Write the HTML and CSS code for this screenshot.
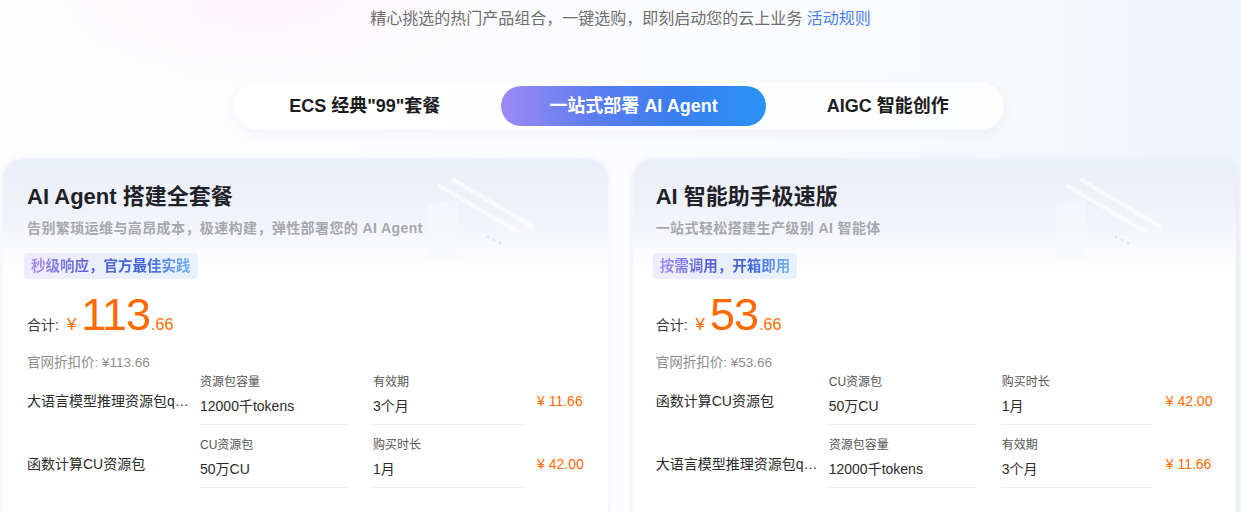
FILE: index.html
```html
<!DOCTYPE html>
<html lang="zh-CN">
<head>
<meta charset="utf-8">
<title>AI Agent 套餐</title>
<link rel="stylesheet" href="styles.css">
</head>
<body>
<div class="page">
  <p class="intro">精心挑选的热门产品组合，一键选购，即刻启动您的云上业务 <a class="rule-link" href="#">活动规则</a></p>

  <div class="tabs-wrap">
    <div class="tabs">
      <div class="tab">ECS 经典"99"套餐</div>
      <div class="tab active">一站式部署 AI Agent</div>
      <div class="tab">AIGC 智能创作</div>
    </div>
  </div>

  <div class="cards">
    <div class="card">
      <svg class="deco" width="110" height="80" viewBox="0 0 110 80"><path d="M0 28 L30 22 L30 80 L0 80 Z" fill="#f7f8fc" opacity="0.6"/><g stroke="#ffffff" stroke-width="4" opacity="0.7"><line x1="10" y1="8" x2="90" y2="55"/><line x1="24" y1="2" x2="105" y2="50"/></g><g fill="#d3d8e2"><circle cx="60" cy="60" r="1"/><circle cx="66" cy="63" r="1"/><circle cx="72" cy="66" r="1"/></g></svg>
      <h2 class="card-title">AI Agent 搭建全套餐</h2>
      <p class="card-sub">告别繁琐运维与高昂成本，极速构建，弹性部署您的 AI Agent</p>
      <div class="badge"><span>秒级响应，官方最佳实践</span></div>
      <div class="price-row">
        <span class="price-label">合计:</span>
        <span class="yen">¥</span><span class="big">113</span><span class="dec">.66</span>
      </div>
      <p class="orig">官网折扣价: ¥113.66</p>
      <div class="items">
        <div class="item">
          <div class="item-name">大语言模型推理资源包qwen-plus</div>
          <div class="spec s1"><div class="spec-k">资源包容量</div><div class="spec-v">12000千tokens</div></div>
          <div class="spec s2"><div class="spec-k">有效期</div><div class="spec-v">3个月</div></div>
          <div class="item-price">¥ 11.66</div>
        </div>
        <div class="item">
          <div class="item-name">函数计算CU资源包</div>
          <div class="spec s1"><div class="spec-k">CU资源包</div><div class="spec-v">50万CU</div></div>
          <div class="spec s2"><div class="spec-k">购买时长</div><div class="spec-v">1月</div></div>
          <div class="item-price">¥ 42.00</div>
        </div>
      </div>
    </div>

    <div class="card">
      <svg class="deco" width="110" height="80" viewBox="0 0 110 80"><path d="M0 28 L30 22 L30 80 L0 80 Z" fill="#f7f8fc" opacity="0.6"/><g stroke="#ffffff" stroke-width="4" opacity="0.7"><line x1="10" y1="8" x2="90" y2="55"/><line x1="24" y1="2" x2="105" y2="50"/></g><g fill="#d3d8e2"><circle cx="60" cy="60" r="1"/><circle cx="66" cy="63" r="1"/><circle cx="72" cy="66" r="1"/></g></svg>
      <h2 class="card-title">AI 智能助手极速版</h2>
      <p class="card-sub">一站式轻松搭建生产级别 AI 智能体</p>
      <div class="badge"><span>按需调用，开箱即用</span></div>
      <div class="price-row">
        <span class="price-label">合计:</span>
        <span class="yen">¥</span><span class="big">53</span><span class="dec">.66</span>
      </div>
      <p class="orig">官网折扣价: ¥53.66</p>
      <div class="items">
        <div class="item">
          <div class="item-name">函数计算CU资源包</div>
          <div class="spec s1"><div class="spec-k">CU资源包</div><div class="spec-v">50万CU</div></div>
          <div class="spec s2"><div class="spec-k">购买时长</div><div class="spec-v">1月</div></div>
          <div class="item-price">¥ 42.00</div>
        </div>
        <div class="item">
          <div class="item-name">大语言模型推理资源包qwen-plus</div>
          <div class="spec s1"><div class="spec-k">资源包容量</div><div class="spec-v">12000千tokens</div></div>
          <div class="spec s2"><div class="spec-k">有效期</div><div class="spec-v">3个月</div></div>
          <div class="item-price">¥ 11.66</div>
        </div>
      </div>
    </div>
  </div>
</div>
</body>
</html>
```

FILE: styles.css
```css
* { box-sizing: border-box; }

html, body {
  margin: 0;
  padding: 0;
}

body {
  width: 1241px;
  height: 512px;
  overflow: hidden;
  font-family: "Liberation Sans", "Noto Sans CJK SC", Arial, sans-serif;
  color: #333;
  background:
    radial-gradient(ellipse 240px 90px at 260px 0px, rgba(252, 236, 246, 0.5), rgba(255,255,255,0) 100%),
    linear-gradient(90deg, #fefeff 0%, #fbfcfe 55%, #f6f8fc 85%, #eff3fa 100%);
}

.page {
  padding-top: 8px;
}

.intro {
  margin: 0;
  text-align: center;
  font-size: 16px;
  line-height: 22px;
  color: #6e6e70;
}

.rule-link {
  color: #4d82ea;
  text-decoration: none;
}

.tabs-wrap {
  display: flex;
  justify-content: center;
  margin-top: 52px;
  padding-right: 3px;
}

.tabs {
  display: flex;
  gap: 13px;
  padding: 4px 7px;
  border-radius: 24px;
  background: rgba(255, 255, 255, 0.75);
  box-shadow: 0 4px 12px rgba(214, 218, 240, 0.3);
}

.tab {
  height: 40px;
  line-height: 40px;
  padding: 0 48px;
  border-radius: 20px;
  font-size: 18px;
  font-weight: 700;
  color: #1c1c1e;
  white-space: nowrap;
}

.tab.active {
  color: #fff;
  background: linear-gradient(90deg, #9d8af6 0%, #5d7ef0 35%, #3a7eef 65%, #2993f4 100%);
}

.cards {
  display: grid;
  grid-template-columns: 1fr 1fr;
  gap: 25px;
  padding: 0 7px 0 3px;
  margin-top: 29px;
}

.card {
  position: relative;
  height: 380px;
  padding: 23px 24px 0 24px;
  border-radius: 20px;
  background:
    linear-gradient(180deg, #ebeff8 0px, #eff2f9 50px, #f8f9fd 85px, #ffffff 110px, #ffffff 380px);
  box-shadow: 0 0 6px rgba(220, 226, 240, 0.6);
}

.card + .card {
  padding-left: 23px;
}

.deco {
  position: absolute;
  top: 18px;
  right: 70px;
}

.card-title {
  position: relative;
  margin: 0;
  font-size: 22px;
  line-height: 30px;
  font-weight: 700;
  color: #1f2329;
}

.card-sub {
  position: relative;
  margin: 6px 0 0;
  font-size: 14px;
  line-height: 20px;
  font-weight: 700;
  letter-spacing: 0.4px;
  color: #a5a8ae;
}

.badge {
  display: inline-block;
  margin-top: 15px;
  margin-left: -3px;
  height: 26px;
  padding: 0 7px;
  border-radius: 4px;
  background: linear-gradient(90deg, #efebfd 0%, #eaf0fd 60%, #e6f2fd 100%);
}

.badge span {
  font-size: 14.5px;
  line-height: 26px;
  font-weight: 700;
  background: linear-gradient(90deg, #a790f1 0%, #5a63d8 35%, #3d63d6 70%, #76b1f4 100%);
  -webkit-background-clip: text;
  background-clip: text;
  color: transparent;
}

.price-row {
  display: flex;
  align-items: baseline;
  margin-top: 12px;
  height: 48px;
  line-height: 48px;
}

.price-label {
  font-size: 14px;
  color: #3a3a3a;
  margin-right: 8px;
}

.yen {
  font-size: 17px;
  color: #ff6a00;
  margin-right: 5px;
}

.big {
  font-size: 45px;
  color: #ff6a00;
  letter-spacing: -1px;
}

.dec {
  font-size: 16px;
  color: #ff6a00;
  margin-left: 1px;
}

.orig {
  margin: 14px 0 0;
  font-size: 13.5px;
  line-height: 20px;
  color: #8e8e8e;
}

.item {
  display: flex;
  align-items: flex-start;
  height: 63px;
}

.item-name {
  flex-shrink: 0;
  width: 173px;
  padding-right: 8px;
  margin-top: 18px;
  font-size: 14px;
  line-height: 20px;
  color: #2b2b2b;
  white-space: nowrap;
  overflow: hidden;
  text-overflow: ellipsis;
}

.spec {
  flex-shrink: 0;
  padding-bottom: 7px;
  border-bottom: 1px solid #ececec;
}

.s1 { width: 148px; margin-right: 25px; }
.s2 { width: 150px; margin-right: 14px; }

.spec-k {
  font-size: 12px;
  line-height: 18px;
  color: #555;
}

.spec-v {
  margin-top: 4px;
  font-size: 14px;
  line-height: 22px;
  color: #2b2b2b;
}

.item-price {
  flex-shrink: 0;
  margin-top: 18px;
  font-size: 14px;
  line-height: 20px;
  color: #ff6a00;
  white-space: nowrap;
}
```
